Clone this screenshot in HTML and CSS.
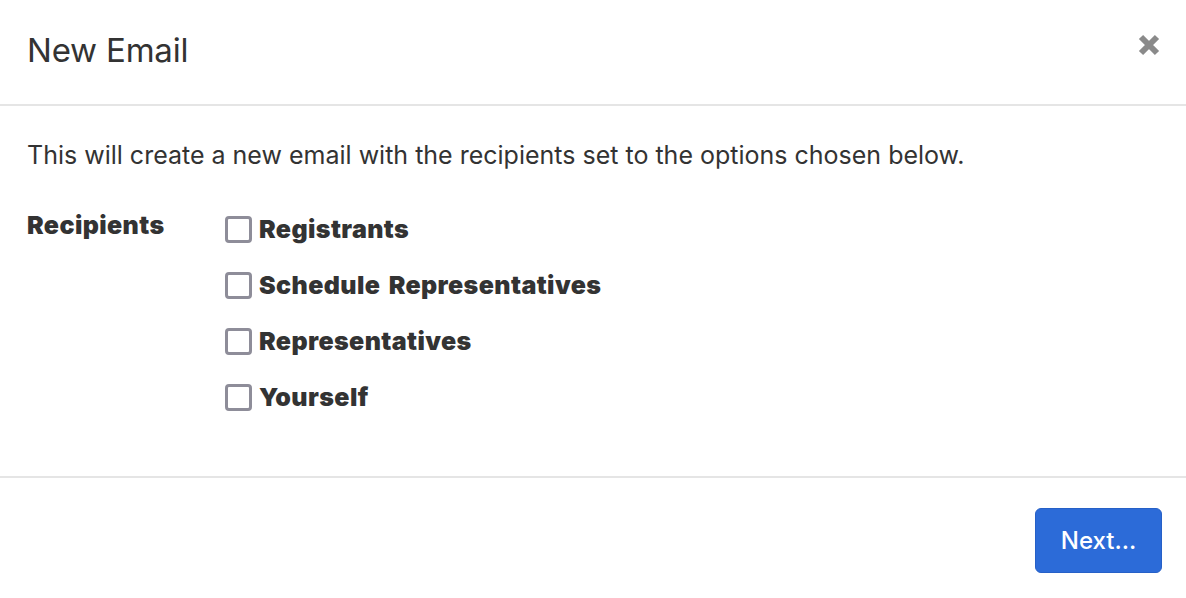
FILE: index.html
```html
<!DOCTYPE html>
<html lang="en">
<head>
<meta charset="utf-8">
<title>New Email</title>
<link rel="stylesheet" href="styles.css">
</head>
<body>
<div class="modal">
  <header class="modal-header">
    <h1 class="modal-title">New Email</h1>
    <button class="close" aria-label="Close">
      <svg width="24" height="24" viewBox="0 0 24 24"><path d="M4 4 L20 20 M20 4 L4 20" stroke="#8a8a8a" stroke-width="6" stroke-linecap="butt"/></svg>
    </button>
  </header>
  <section class="modal-body">
    <p class="intro">This will create a new email with the recipients set to the options chosen below.</p>
    <div class="field">
      <div class="field-label">Recipients</div>
      <div class="options">
        <label class="option"><span class="box"></span>Registrants</label>
        <label class="option"><span class="box"></span>Schedule Representatives</label>
        <label class="option"><span class="box"></span>Representatives</label>
        <label class="option"><span class="box"></span>Yourself</label>
      </div>
    </div>
  </section>
  <footer class="modal-footer">
    <button class="btn-primary">Next...</button>
  </footer>
</div>
</body>
</html>
```
FILE: styles.css
```css
html, body {
  margin: 0;
  padding: 0;
  background: #fff;
}
body {
  font-family: Inter, "Liberation Sans", sans-serif;
  color: #333;
}
.modal {
  width: 1186px;
  height: 598px;
  display: flex;
  flex-direction: column;
}
.modal-header {
  height: 104px;
  border-bottom: 2px solid #e5e5e5;
  display: flex;
  align-items: center;
  justify-content: space-between;
  padding: 0 25px 0 27px;
  box-sizing: content-box;
}
.modal-title {
  margin: 0;
  font-size: 33px;
  font-weight: 400;
  color: #333;
  letter-spacing: -0.2px;
  padding-bottom: 4px;
}
.close {
  border: 0;
  background: none;
  padding: 0;
  width: 24px;
  height: 24px;
  margin-bottom: 15px;
  cursor: pointer;
}
.close svg { display: block; }
.modal-body {
  padding: 33px 27px 0 27px;
  border-bottom: 2px solid #e5e5e5;
  box-sizing: border-box;
  height: 372px;
}
.intro {
  margin: 0;
  font-size: 25px;
  line-height: 32px;
  color: #333;
}
.field {
  display: flex;
  margin-top: 38px;
}
.field-label {
  width: 198px;
  font-size: 25px;
  font-weight: 900;
  line-height: 32px;
  letter-spacing: 0.4px;
}
.options {
  display: flex;
  flex-direction: column;
  gap: 24px;
  padding-top: 4px;
}
.option {
  display: flex;
  align-items: center;
  font-size: 25px;
  font-weight: 900;
  line-height: 32px;
  letter-spacing: 0.4px;
  word-spacing: 3px;
  color: #333;
}
.box {
  width: 21px;
  height: 21px;
  border: 3px solid #8e8d99;
  border-radius: 4px;
  margin-right: 7px;
  background: #fff;
}
.modal-footer {
  flex: 1;
  display: flex;
  justify-content: flex-end;
  align-items: flex-start;
  padding: 30px 24px 0 0;
}
.btn-primary {
  width: 127px;
  height: 65px;
  background: #2c6bd8;
  border: 1px solid #2660c7;
  border-radius: 6px;
  color: #fff;
  font-family: Inter, "Liberation Sans", sans-serif;
  font-size: 24px;
  font-weight: 500;
}
```
